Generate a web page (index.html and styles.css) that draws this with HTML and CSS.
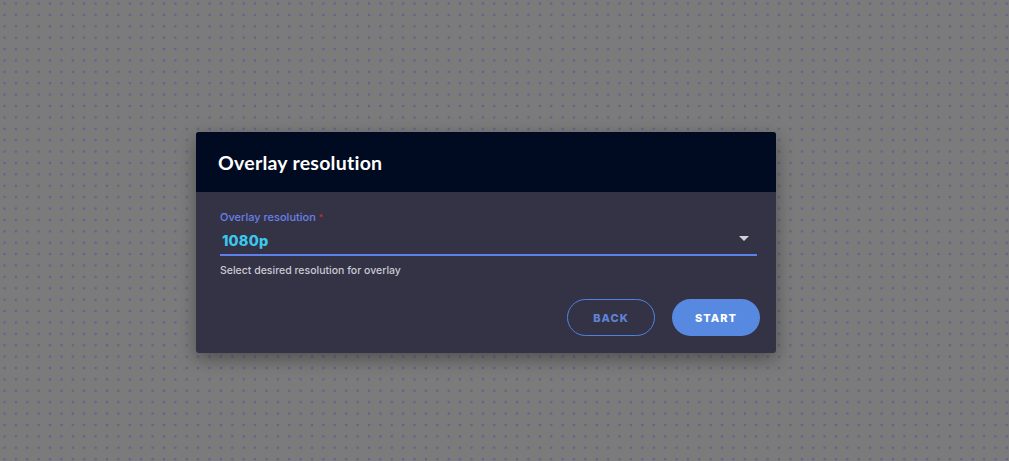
FILE: index.html
```html
<!DOCTYPE html>
<html>
<head>
<meta charset="utf-8">
<link rel="stylesheet" href="styles.css">
</head>
<body>
<div class="dialog">
  <div class="dialog-header">
    <h1 class="dialog-title">Overlay resolution</h1>
  </div>
  <div class="dialog-body">
    <div class="field">
      <label class="field-label">Overlay resolution <span class="req">*</span></label>
      <div class="select">
        <span class="select-value">1080p</span>
        <svg class="select-arrow" width="10" height="5" viewBox="0 0 10 5"><path d="M0 0 L10 0 L5 5 Z" fill="#d0d0d8"/></svg>
      </div>
      <div class="field-help">Select desired resolution for overlay</div>
    </div>
    <div class="actions">
      <button class="btn btn-outline">BACK</button>
      <button class="btn btn-primary">START</button>
    </div>
  </div>
</div>
</body>
</html>
```
FILE: styles.css
```css
html, body {
  margin: 0;
  height: 100%;
}
body {
  background-color: #7b7b7b;
  background-image: radial-gradient(circle, #62628a 1.1px, transparent 1.6px);
  background-size: 11.4px 11.4px;
  background-position: -1.2px -2.2px;
  padding: 132px 0 0 196px;
  box-sizing: border-box;
  font-family: "Inter", "Lato", sans-serif;
}
.dialog {
  width: 580px;
  border-radius: 3px;
  overflow: hidden;
  background: #343346;
  box-shadow: 0 6px 18px rgba(0,0,0,0.35);
}
.dialog-header {
  height: 60px;
  background: #000a20;
  display: flex;
  align-items: center;
  padding: 0 22px;
}
.dialog-title {
  margin: 0;
  color: #ffffff;
  font-family: "Lato", sans-serif;
  font-weight: 700;
  font-size: 19.5px;
  letter-spacing: 0.25px;
}
.dialog-body {
  padding: 18px 16px 17px 24px;
}
.field {
  display: flex;
  flex-direction: column;
}
.field-label {
  font-size: 11px;
  color: #6a80e6;
  font-weight: 500;
  line-height: 14px;
}
.req {
  color: #d03030;
  font-size: 8px;
  vertical-align: top;
}
.select {
  margin-right: 3px;
  display: flex;
  align-items: center;
  justify-content: space-between;
  border-bottom: 2px solid #5d80ec;
  padding: 2px 8px 0 2px;
  box-sizing: border-box;
  height: 32px;
}
.select-value {
  color: #3cc8ee;
  font-weight: 800;
  font-size: 14.5px;
  letter-spacing: 0.2px;
}
.select-arrow {
  display: block;
  margin-top: -4px;
}
.field-help {
  margin-top: 8px;
  font-size: 10.5px;
  color: #cacad3;
  font-weight: 500;
  line-height: 13px;
}
.actions {
  display: flex;
  justify-content: flex-end;
  gap: 17px;
  margin-top: 22px;
}
.btn {
  font-family: "Inter", sans-serif;
  font-weight: 800;
  font-size: 11px;
  letter-spacing: 1px;
  height: 37px;
  border-radius: 19px;
  cursor: pointer;
}
.btn-outline {
  width: 88px;
  background: transparent;
  border: 1px solid #4f82e0;
  color: #5f82d6;
}
.btn-primary {
  width: 88px;
  background: #5689df;
  border: none;
  color: #ffffff;
}
```
